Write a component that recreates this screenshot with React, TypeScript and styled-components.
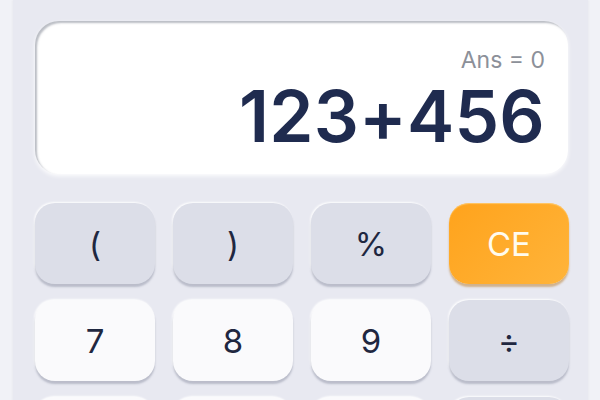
import React from "react";
import styled, { createGlobalStyle } from "styled-components";

const Global = createGlobalStyle`
  html, body { margin: 0; padding: 0; background: #f1f2f7; }
  body { font-family: Inter, "Noto Sans", sans-serif; }
`;

const Page = styled.div`
  width: 600px;
  height: 400px;
  overflow: hidden;
  background: #f1f2f7;
  padding-left: 13px;
  box-sizing: border-box;
`;

const Body = styled.div`
  width: 575px;
  height: 440px;
  box-sizing: border-box;
  background: #e8e9f1;
  padding: 21px 20px 0 22px;
  box-shadow: 1px 0 2px rgba(0,0,0,0.03), -1px 0 2px rgba(0,0,0,0.03);
`;

const Display = styled.div`
  height: 153px;
  box-sizing: border-box;
  background: #ffffff;
  border-radius: 24px;
  box-shadow: inset 2px 2px 2px rgba(120,125,140,0.5), 0 2px 4px rgba(255,255,255,0.9);
  display: flex;
  flex-direction: column;
  align-items: flex-end;
  padding: 26px 23px 0 20px;
`;

const Ans = styled.div`
  font-size: 23px;
  color: #8c9099;
  line-height: 26px;
`;

const Expr = styled.div`
  font-size: 71px;
  font-weight: 600;
  color: #1f2b4f;
  line-height: 76px;
  margin-top: 5px;
  letter-spacing: 0.2px;
`;

const Grid = styled.div`
  margin-top: 29px;
  display: grid;
  grid-template-columns: repeat(4, 120px);
  column-gap: 18px;
  row-gap: 16px;
`;

type Kind = "fn" | "num" | "op" | "accent";

const Key = styled.div<{ $kind: Kind }>`
  height: 81px;
  border-radius: 20px;
  display: flex;
  align-items: center;
  justify-content: center;
  font-size: 33px;
  font-weight: 400;
  color: ${(p) => (p.$kind === "accent" ? "#fffbee" : "#1f2740")};
  background: ${(p) =>
    p.$kind === "accent"
      ? "linear-gradient(135deg, #ffa31c 0%, #ffb43a 100%)"
      : p.$kind === "num"
      ? "#fafafc"
      : "#dcdee8"};
  box-shadow: ${(p) =>
    p.$kind === "accent"
      ? "0 3px 2px rgba(180,110,20,0.45), inset 0 1px 1px rgba(255,220,150,0.6)"
      : "0 3px 2px rgba(130,135,155,0.45), -1px -1px 2px rgba(255,255,255,0.9)"};
`;

const keys: { label: string; kind: Kind }[] = [
  { label: "(", kind: "fn" },
  { label: ")", kind: "fn" },
  { label: "%", kind: "fn" },
  { label: "CE", kind: "accent" },
  { label: "7", kind: "num" },
  { label: "8", kind: "num" },
  { label: "9", kind: "num" },
  { label: "÷", kind: "op" },
  { label: "4", kind: "num" },
  { label: "5", kind: "num" },
  { label: "6", kind: "num" },
  { label: "×", kind: "op" },
];

export default function App() {
  return (
    <>
      <Global />
      <Page>
        <Body>
          <Display>
            <Ans>Ans = 0</Ans>
            <Expr>123+456</Expr>
          </Display>
          <Grid>
            {keys.map((k, i) => (
              <Key key={i} $kind={k.kind}>
                {k.label}
              </Key>
            ))}
          </Grid>
        </Body>
      </Page>
    </>
  );
}
